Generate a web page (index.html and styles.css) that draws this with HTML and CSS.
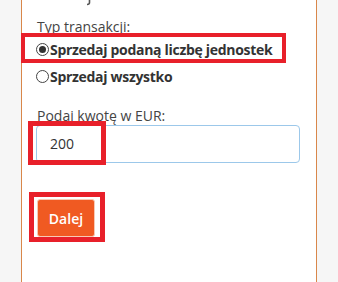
FILE: index.html
```html
<!DOCTYPE html>
<html lang="pl">
<head>
<meta charset="utf-8">
<title>Sprzedaj</title>
<link rel="stylesheet" href="styles.css">
</head>
<body>
<div class="page">
  <div class="card">
    <div class="prev"><svg class="prev-mark" width="5" height="6" viewBox="0 0 5 6"><path d="M3.5 0 V2.5 Q3.5 4.5 1 4.5" fill="none" stroke="#555" stroke-width="1.6"/></svg></div>
    <div class="field-label">Typ transakcji:</div>
    <div class="radio-row"><span class="radio checked"></span><span class="radio-text">Sprzedaj podaną liczbę jednostek</span></div>
    <div class="radio-row"><span class="radio"></span><span class="radio-text">Sprzedaj wszystko</span></div>
    <div class="field-label amount-label">Podaj kwotę w EUR:</div>
    <div class="input">200</div>
    <button class="btn">Dalej</button>
  </div>
  <div class="mark mark-radio"></div>
  <div class="mark mark-input"></div>
  <div class="mark mark-btn"></div>
</div>
</body>
</html>
```

FILE: styles.css
```css
html, body {
  margin: 0;
  padding: 0;
}
body {
  background: #f6f6f6;
  font-family: "Open Sans", "DejaVu Sans", sans-serif;
  color: #333;
  font-size: 14px;
  width: 338px;
  height: 282px;
  overflow: hidden;
}
.page {
  position: relative;
  height: 282px;
  padding-left: 21px;
}
.card {
  width: 279px;
  height: 282px;
  background: #fff;
  border-left: 1px solid #d9874a;
  border-right: 1px solid #d9874a;
  padding-left: 15px;
  box-sizing: content-box;
}
.prev {
  height: 6px;
  padding-left: 49px;
}
.prev-mark {
  display: block;
}
.field-label {
  margin-top: 11px;
  line-height: 19px;
  font-size: 14px;
  color: #444;
}
.radio-row {
  display: flex;
  align-items: center;
  height: 27px;
}
.radio {
  width: 11px;
  height: 11px;
  border: 1px solid #444;
  border-radius: 50%;
  margin-left: -1px;
  margin-right: 1px;
  display: flex;
  align-items: center;
  justify-content: center;
  flex: none;
}
.radio.checked::after {
  content: "";
  width: 7px;
  height: 7px;
  border-radius: 50%;
  background: #333;
}
.radio-text {
  font-weight: 700;
  font-size: 14px;
  letter-spacing: -0.3px;
  color: #333;
}
.amount-label {
  margin-top: 16px;
}
.input {
  margin-left: -1px;
  width: 264px;
  height: 38px;
  box-sizing: border-box;
  border: 1px solid #9cc8ea;
  border-radius: 4px;
  padding-left: 13px;
  line-height: 36px;
  font-size: 14px;
  color: #333;
}
.btn {
  display: block;
  margin-top: 36px;
  width: 58px;
  height: 38px;
  border: 1px solid #f8c9b4;
  border-radius: 3px;
  background: #f05a22;
  color: #fff;
  font-family: "Open Sans", "DejaVu Sans", sans-serif;
  font-size: 14px;
  font-weight: 600;
  padding: 0;
}
.mark {
  position: absolute;
  border: 4px solid #e8202a;
  box-sizing: border-box;
}
.mark-radio {
  left: 21px;
  top: 33px;
  width: 265px;
  height: 30px;
}
.mark-input {
  left: 28px;
  top: 121px;
  width: 78px;
  height: 44px;
  border-width: 5px;
}
.mark-btn {
  left: 29px;
  top: 192px;
  width: 76px;
  height: 50px;
  border-width: 5px;
}
```
